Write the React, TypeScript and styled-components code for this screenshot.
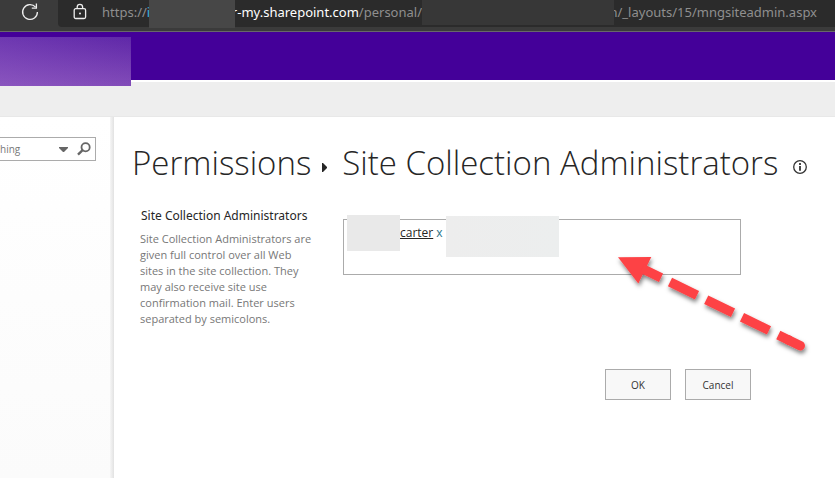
import React from "react";
import styled, { createGlobalStyle } from "styled-components";

const Global = createGlobalStyle`
  * { box-sizing: border-box; }
  body {
    margin: 0;
    background: #fff;
    color: #262626;
    font-family: "Open Sans", "Noto Sans", sans-serif;
    font-size: 12px;
    overflow: hidden;
  }
`;

const Page = styled.div`
  min-height: 100vh;
  display: flex;
  flex-direction: column;
`;

const BrowserBar = styled.header`
  display: flex;
  height: 32px;
  padding-left: 21px;
  background: #3b3b3b;
  border-bottom: 1px solid #686868;
`;

const IconButton = styled.button`
  display: flex;
  padding: 0;
  border: 0;
  background: none;
  cursor: pointer;
`;

const ReloadButton = styled(IconButton)`
  width: 37px;
  padding-top: 3px;
`;

const AddressBox = styled.div`
  flex: 1;
  display: flex;
  height: 27px;
  padding-left: 14px;
  background: #2b2b2b;
  border-bottom-left-radius: 4px;
`;

const LockSlot = styled.span`
  width: 30px;
  padding-top: 3px;
`;

const UrlText = styled.span<{ $width: number; $end?: boolean }>`
  display: flex;
  justify-content: ${(p) => (p.$end ? "flex-end" : "flex-start")};
  width: ${(p) => p.$width}px;
  white-space: nowrap;
  font-family: "Noto Sans", sans-serif;
  font-size: 13px;
  line-height: 25px;
  color: #8f8f8f;
`;

const Host = styled.span`
  color: #fff;
`;

const HostStart = styled.span`
  color: #35b5e0;
`;

const UrlMask = styled.span<{ $width: number; $height: number; $tone: string }>`
  z-index: 1;
  flex: none;
  width: ${(p) => p.$width}px;
  height: ${(p) => p.$height}px;
  background: ${(p) => p.$tone};
`;

const SuiteBar = styled.div`
  height: 48px;
  padding-top: 5px;
  background: #440099;
`;

const SuiteBrand = styled.div`
  position: relative;
  width: 131px;
  height: 49px;
  background:
    linear-gradient(to right, rgba(150, 100, 200, 0.25), rgba(90, 30, 160, 0.1)),
    linear-gradient(to bottom, #6029a9, #8650bb);
`;

const Ribbon = styled.div`
  height: 37px;
  border-top: 2px solid #fff;
  border-bottom: 1px solid #e8e8e8;
  background: #eee;
`;

const Workspace = styled.div`
  flex: 1;
  display: flex;
`;

const Sidebar = styled.aside`
  width: 114px;
  padding: 20px 18px 0 0;
  background:
    linear-gradient(to right, #f6f6f6, #e2e2e2) right / 4px 100% no-repeat,
    linear-gradient(to bottom, #fff, #fbfbfb);
`;

const SearchBox = styled.form`
  display: flex;
  align-items: center;
  height: 24px;
  border: 1px solid #ababab;
  border-left: 0;
  background: #fff;
`;

const SearchInput = styled.input`
  flex: 1;
  min-width: 0;
  padding: 0;
  border: 0;
  outline: 0;
  background: none;
  color: #777;
  font: 10px "Open Sans", sans-serif;
`;

const SearchIcons = styled.div`
  display: flex;
  align-items: center;
  gap: 9px;
  padding-right: 4px;
`;

const Main = styled.main`
  flex: 1;
  padding: 25px 19px 0;
`;

const Title = styled.h1`
  display: flex;
  align-items: center;
  margin: 0 0 0 -1px;
  font-size: 33px;
  font-weight: 300;
  line-height: 42px;
  white-space: nowrap;
`;

const TitleLink = styled.a`
  color: inherit;
  text-decoration: none;
`;

const Crumb = styled.svg`
  margin: 8px 15px 0 11px;
`;

const HelpLink = styled.a`
  display: flex;
  margin: 8px 0 0 15px;
`;

const Section = styled.section`
  position: relative;
  display: grid;
  grid-template-columns: 178px minmax(0, 398px);
  column-gap: 24px;
  padding: 22px 0 0 8px;
`;

const SectionLabel = styled.label`
  display: block;
  margin-top: 1px;
  font-family: "Noto Sans", sans-serif;
  font-size: 12px;
  line-height: 18px;
`;

const Description = styled.p`
  margin: 6px 0 0 -1px;
  padding-right: 5px;
  color: #777;
  font-size: 11px;
  line-height: 16px;
`;

const People = styled.div`
  display: flex;
  align-items: flex-start;
  height: 56px;
  margin-top: 13px;
  padding-left: 3px;
  border: 1px solid #ababab;
`;

const NameMask = styled.span<{ $wide?: boolean }>`
  flex: none;
  width: ${(p) => (p.$wide ? 113 : 53)}px;
  height: ${(p) => (p.$wide ? 41 : 36)}px;
  margin-top: ${(p) => (p.$wide ? -4 : -5)}px;
  background: ${(p) => (p.$wide ? "linear-gradient(to right, #ededed, #eceeee)" : "#e9e9e9")};
`;

const Person = styled.span`
  display: flex;
  gap: 3px;
  width: 46px;
  padding-top: 4px;
  line-height: 17px;
  white-space: nowrap;
`;

const PersonName = styled.span`
  text-decoration: underline;
`;

const RemoveButton = styled.button`
  padding: 0;
  border: 0;
  background: none;
  color: #2a7388;
  font: inherit;
  line-height: 17px;
`;

const PeopleInput = styled.input`
  flex: 1;
  min-width: 0;
  height: 26px;
  border: 0;
  outline: 0;
  background: none;
  font: inherit;
`;

const Actions = styled.div`
  display: flex;
  justify-content: flex-end;
  gap: 14px;
  max-width: 618px;
  margin-top: 42px;
`;

const ActionButton = styled.button`
  width: 66px;
  height: 31px;
  padding: 0;
  border: 1px solid #ababab;
  background: #f8f8f8;
  color: #333;
  font: 10px "Open Sans", sans-serif;
`;

const Pointer = styled.svg`
  position: absolute;
  left: 481px;
  top: 70px;
  pointer-events: none;
`;

export default function App() {
  return (
    <Page>
      <Global />
      <BrowserBar>
        <ReloadButton type="button" aria-label="Reload">
          <svg width="18" height="18" viewBox="0 0 18 18" fill="none" stroke="#eee" strokeWidth="1.3">
            <path d="M14.6 4.2A7.4 7.4 0 1 0 16.4 9" />
            <path d="M15.4 0.6V5.2H10.8" />
          </svg>
        </ReloadButton>
        <AddressBox>
          <LockSlot>
            <svg width="16" height="17" viewBox="0 0 16 17" fill="none" stroke="#eee" strokeWidth="1.3">
              <rect x="2.2" y="5.7" width="11.4" height="9.8" rx="1.5" />
              <path d="M5.2 5.7V4a2.7 2.7 0 0 1 5.4 0v1.7" />
              <circle cx="8" cy="10.5" r="1" fill="#eee" stroke="none" />
            </svg>
          </LockSlot>
          <UrlText $width={47}>
            https://<HostStart>i</HostStart>
          </UrlText>
          <UrlMask $width={86} $height={28} $tone="#474747" />
          <UrlText $width={187} $end>
            <Host>r-my.sharepoint.com</Host>/personal/
          </UrlText>
          <UrlMask $width={192} $height={25} $tone="#373737" />
          <UrlText $width={203} $end>
            n/_layouts/15/mngsiteadmin.aspx
          </UrlText>
        </AddressBox>
      </BrowserBar>
      <SuiteBar>
        <SuiteBrand />
      </SuiteBar>
      <Ribbon />
      <Workspace>
        <Sidebar>
          <SearchBox>
            <SearchInput aria-label="Search" defaultValue="hing" />
            <SearchIcons>
              <svg width="9" height="5" viewBox="0 0 9 5" fill="#666">
                <path d="M0 0h9v1L5 5H4L0 1z" />
              </svg>
              <IconButton type="button" aria-label="Search">
                <svg width="14" height="14" viewBox="0 0 14 14" fill="none" stroke="#666">
                  <circle cx="8.6" cy="5.2" r="4.1" strokeWidth="1.8" />
                  <path d="M5.6 8.2L1 12.6" strokeWidth="2.4" />
                </svg>
              </IconButton>
            </SearchIcons>
          </SearchBox>
        </Sidebar>
        <Main>
          <Title>
            <TitleLink href="#permissions">Permissions</TitleLink>
            <Crumb width="5" height="9" viewBox="0 0 5 9" fill="#262626">
              <path d="M0 0h1l4 4v1L1 9H0z" />
            </Crumb>
            <span>Site Collection Administrators</span>
            <HelpLink href="#help" aria-label="More information">
              <svg width="14" height="14" viewBox="0 0 14 14" fill="none" stroke="#333">
                <circle cx="7" cy="7" r="6.3" strokeWidth="1.3" />
                <path d="M7 6v4.8M7 3v1.9" strokeWidth="1.8" />
              </svg>
            </HelpLink>
          </Title>
          <Section>
            <div>
              <SectionLabel htmlFor="admins">Site Collection Administrators</SectionLabel>
              <Description>
                Site Collection Administrators are given full control over all Web sites in the site
                collection. They may also receive site use confirmation mail. Enter users separated by
                semicolons.
              </Description>
            </div>
            <People>
              <NameMask />
              <Person>
                <PersonName>carter</PersonName>
                <RemoveButton type="button" aria-label="Remove carter">x</RemoveButton>
              </Person>
              <NameMask $wide />
              <PeopleInput id="admins" />
            </People>
            <Pointer width="200" height="110" viewBox="614 254 200 110">
              <defs>
                <filter id="pointerShadow" x="-10%" y="-10%" width="120%" height="130%">
                  <feDropShadow dx="1" dy="3" stdDeviation="2" floodColor="#000" floodOpacity="0.5" />
                </filter>
              </defs>
              <g filter="url(#pointerShadow)" fill="#fd4245" stroke="#fd4245" strokeWidth="9.4">
                <path stroke="none" d="M618 257.2L651.3 257L638.3 283.4Z" />
                <path d="M642 268.6L661 277.8M670 282L697 295.3M706.2 299.7L733 312.8M742 317.2L769 330.4M778.3 335L790 340.7" />
                <path d="M788 339.7L800.3 345.7" strokeLinecap="round" />
              </g>
            </Pointer>
          </Section>
          <Actions>
            <ActionButton type="button">OK</ActionButton>
            <ActionButton type="button">Cancel</ActionButton>
          </Actions>
        </Main>
      </Workspace>
    </Page>
  );
}
